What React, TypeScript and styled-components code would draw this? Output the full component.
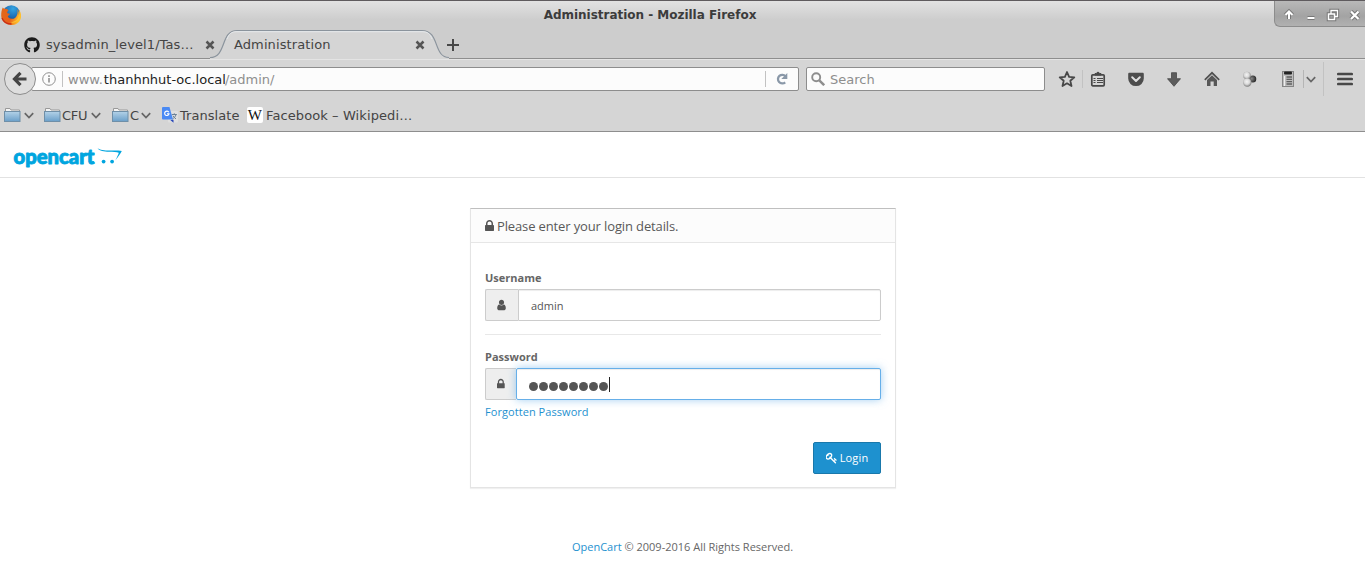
import React from 'react';
import styled, { createGlobalStyle } from 'styled-components';
import { FaGithub } from 'react-icons/fa';

const Global = createGlobalStyle`
  * { box-sizing: border-box; }
  body { margin: 0; background: #fff; overflow: hidden; }
  svg { display: block; flex: none; }
`;

const Window = styled.div`
  width: 1365px;
  height: 569px;
  display: flex;
  flex-direction: column;
  font-family: 'DejaVu Sans', sans-serif;
  font-size: 13px;
  color: #444;
`;

/* ---------- browser chrome ---------- */

const TitleBar = styled.div`
  height: 30px;
  flex: none;
  display: flex;
  align-items: flex-start;
  border-top: 1px solid #5f5b5e;
  background: linear-gradient(#e2e2e2, #cdcdcd 19px);
`;
const AppIcon = styled.div`
  width: 24px;
  padding: 4px 0 0 1px;
`;
const WindowTitle = styled.div`
  width: 1250px;
  padding-left: 2px;
  line-height: 28px;
  text-align: center;
  font-size: 12px;
  letter-spacing: -0.02px;
  font-weight: bold;
  color: #3c3c3c;
`;
const WindowControls = styled.div`
  width: 91px;
  height: 26px;
  border-left: 1px solid #8c8c8c;
  border-bottom: 1px solid #8c8c8c;
  border-bottom-left-radius: 6px;
  background: linear-gradient(#b9b9b9, #a3a3a3 60%, #b1b1b1);
`;

const TabStrip = styled.div`
  height: 29px;
  flex: none;
  display: flex;
  align-items: center;
  background: #cdcdcd;
  border-bottom: 1px solid #8e8e8e;
`;
const Tab = styled.div<{ $width: number; $pad: number }>`
  position: relative;
  width: ${(p) => p.$width}px;
  height: 30px;
  padding: 1px 0 0 ${(p) => p.$pad}px;
  display: flex;
  align-items: center;
`;
const TabLabel = styled.span<{ $left?: number }>`
  position: relative;
  flex: 1;
  margin-left: ${(p) => p.$left ?? 0}px;
  line-height: 27px;
  letter-spacing: 0.1px;
  white-space: nowrap;
`;
const TabShape = styled.svg`
  position: absolute;
  left: -5px;
  top: 0;
`;
const TabIcon = styled.div`
  position: relative;
`;

const Toolbar = styled.div`
  height: 40px;
  flex: none;
  display: flex;
  align-items: center;
  padding: 0 0 1px 4px;
  background: #d5d5d5;
  border-top: 1px solid #e4e4e4;
`;
const BackButton = styled.div`
  position: relative;
  z-index: 1;
  width: 32px;
  height: 32px;
  border: 1px solid #8c8c8c;
  border-radius: 50%;
  background: #dedede;
  display: flex;
  align-items: center;
  justify-content: center;
`;
const Field = styled.div<{ $width: number; $left: number; $pad: number }>`
  width: ${(p) => p.$width}px;
  height: 24px;
  margin-left: ${(p) => p.$left}px;
  padding-left: ${(p) => p.$pad}px;
  border: 1px solid #8d8d8d;
  border-radius: 2px;
  background: #fcfcfc;
  display: flex;
  align-items: center;
  color: #8e8e8e;
`;
const Url = styled.span`
  flex: 1;
  padding-top: 1px;
  white-space: nowrap;
  b { margin-left: 1px; margin-right: -1px; font-weight: normal; color: #222; }
`;
const SearchHint = styled.span`
  padding-top: 1px;
  margin-left: 5px;
`;
const Rule = styled.i<{ $height: number; $color?: string; $left?: number }>`
  width: 1px;
  flex: none;
  height: ${(p) => p.$height}px;
  margin-left: ${(p) => p.$left ?? 0}px;
  background: ${(p) => p.$color ?? '#c2c2c2'};
`;
const Slot = styled.div<{ $width: number; $left?: number }>`
  width: ${(p) => p.$width}px;
  flex: none;
  margin-left: ${(p) => p.$left ?? 0}px;
  display: flex;
  justify-content: center;
`;

const Bookmarks = styled.div`
  height: 33px;
  flex: none;
  display: flex;
  align-items: center;
  padding-left: 4px;
  background: #d5d5d5;
  border-bottom: 1px solid #8e8e8e;
`;
const Bookmark = styled.div<{ $width: number; $gap: number; $spacing?: number }>`
  width: ${(p) => p.$width}px;
  flex: none;
  display: flex;
  align-items: center;
  gap: ${(p) => p.$gap}px;
  white-space: nowrap;
  letter-spacing: ${(p) => p.$spacing ?? 0}px;
  line-height: 30px;
`;
const BookmarkLabel = styled.span<{ $width?: number }>`
  width: ${(p) => (p.$width ? `${p.$width}px` : 'auto')};
  padding-top: 2px;
`;

/* ---------- login page ---------- */

const Header = styled.header`
  height: 46px;
  flex: none;
  padding: 10px 0 0 12px;
  border-bottom: 1px solid #e2e2e2;
  background: #fff;
`;
const Page = styled.main`
  flex: 1;
  padding-top: 30px;
  font-family: 'Open Sans', sans-serif;
  font-size: 11px;
  color: #666;
`;
const Panel = styled.section`
  width: 426px;
  height: 280px;
  margin: 0 auto 0 470px;
  border: 1px solid #e4e4e4;
  border-top: 1px solid #bfbfbf;
  box-shadow: 0 1px 1px rgba(0, 0, 0, 0.06);
`;
const PanelHeading = styled.h1`
  height: 34px;
  margin: 0;
  padding-left: 14px;
  display: flex;
  align-items: center;
  gap: 3px;
  border-bottom: 1px solid #e6e6e6;
  background: #fcfcfc;
  font-size: 13px;
  letter-spacing: -0.13px;
  font-weight: normal;
  color: #595959;
`;
const PanelBody = styled.div`
  padding: 27px 14px 0;
  display: flex;
  flex-direction: column;
`;
const Label = styled.label`
  height: 15px;
  margin-bottom: 4px;
  line-height: 15px;
  font-weight: bold;
`;
const Group = styled.div`
  height: 32px;
  display: flex;
`;
const Addon = styled.span<{ $width: number }>`
  width: ${(p) => p.$width}px;
  padding-left: 11px;
  display: flex;
  align-items: center;
  border: 1px solid #ccc;
  border-right: 0;
  border-radius: 2px 0 0 2px;
  background: #eee;
  color: #555;
`;
const Input = styled.div<{ $focused?: boolean }>`
  position: relative;
  flex: 1;
  padding: 1px 0 0 12px;
  display: flex;
  align-items: center;
  border: 1px solid ${(p) => (p.$focused ? '#66afe9' : '#ccc')};
  border-radius: ${(p) => (p.$focused ? '2px' : '0 2px 2px 0')};
  background: #fff;
  box-shadow: inset 0 1px 1px rgba(0, 0, 0, 0.075)
    ${(p) => (p.$focused ? ', 0 0 8px rgba(102, 175, 233, 0.6)' : '')};
  color: #555;
`;
const Dot = styled.i`
  width: 9px;
  height: 9px;
  margin: 3px 1px 0 0;
  border-radius: 50%;
  background: #555;
`;
const Caret = styled.i`
  width: 1px;
  height: 15px;
  margin-top: -1px;
  background: #222;
`;
const Divider = styled.hr`
  width: 100%;
  height: 1px;
  margin: 13px 0 14px;
  border: 0;
  background: #e8e8e8;
`;
const Link = styled.a`
  color: #1e91cf;
`;
const Forgotten = styled(Link)`
  margin-top: 4px;
  line-height: 16px;
  letter-spacing: 0.06px;
`;
const LoginButton = styled.button`
  align-self: flex-end;
  width: 68px;
  height: 32px;
  margin-top: 22px;
  padding: 0 0 1px;
  display: flex;
  align-items: center;
  justify-content: center;
  gap: 3px;
  border: 1px solid #1978ab;
  border-radius: 2px;
  background: #1e91cf;
  color: #fff;
  font: 11px 'Open Sans', sans-serif;
  letter-spacing: 0.15px;
`;
const Footer = styled.footer`
  margin-top: 51px;
  line-height: 16px;
  text-align: center;
`;

/* ---------- icons ---------- */

const LockIcon = ({ size }: { size: number }) => (
  <svg width={(size * 1152) / 1792} height={size} viewBox="320 0 1152 1792" fill="#555">
    <path d="M640 768h512v-192q0-106-75-181t-181-75-181 75-75 181v192zm832 96v576q0 40-28 68t-68 28h-960q-40 0-68-28t-28-68v-576q0-40 28-68t68-28h32v-192q0-184 132-316t316-132 316 132 132 316v192h32q40 0 68 28t28 68z" />
  </svg>
);
const UserIcon = () => (
  <svg width="9" height="12" viewBox="256 0 1280 1792" fill="#555">
    <path d="M1536 1399q0 109-62.5 187t-150.5 78h-854q-88 0-150.5-78t-62.5-187q0-85 8.5-160.5t31.5-152 58.5-131 94-89 134.5-34.5q131 128 313 128t313-128q76 0 134.5 34.5t94 89 58.5 131 31.5 152 8.5 160.5zm-256-887q0 159-112.5 271.5t-271.5 112.5-271.5-112.5-112.5-271.5 112.5-271.5 271.5-112.5 271.5 112.5 112.5 271.5z" />
  </svg>
);
const KeyIcon = () => (
  <svg width="11" height="12" viewBox="96 0 1600 1792" fill="#fff">
    <path d="M832 512q0-80-56-136t-136-56-136 56-56 136q0 42 19 83-41-19-83-19-80 0-136 56t-56 136 56 136 136 56 136-56 56-136q0-42-19-83 41 19 83 19 80 0 136-56t56-136zm851 704q0 17-49 66t-66 49q-9 0-28.5-16t-36.5-33-38.5-40-24.5-26l-96 96 220 220q28 28 28 68 0 42-39 81t-81 39q-40 0-68-28l-671-671q-176 131-365 131-163 0-265.5-102.5t-102.5-265.5q0-160 95-313t248-248 313-95q163 0 265.5 102.5t102.5 265.5q0 189-131 365l355 355 96-96q-3-3-26-24.5t-40-38.5-33-36.5-16-28.5q0-17 49-66t66-49q13 0 23 10 6 6 46 44.5t82 79.5 86.5 86 73 78 28.5 41z" />
  </svg>
);
const FirefoxIcon = () => (
  <svg width="20" height="20" viewBox="0 0 20 20">
    <defs>
      <linearGradient id="fox" x1="0" y1="0" x2="1" y2="0.3">
        <stop offset="0" stopColor="#e06a1c" />
        <stop offset="0.6" stopColor="#e8601a" />
        <stop offset="1" stopColor="#ffc02d" />
      </linearGradient>
      <radialGradient id="globe" cx="0.6" cy="0.2" r="0.8">
        <stop offset="0" stopColor="#35a5e2" />
        <stop offset="0.6" stopColor="#1c6cb4" />
        <stop offset="1" stopColor="#153a78" />
      </radialGradient>
    </defs>
    <circle cx="10.300" cy="9" r="8.700" fill="url(#globe)" />
    <path d="M1.800 2.400C2.600 3.600 3.700 3.900 5 3.800c1 .2 1.800 .8 2.500 1.800-1 .5-1.400 1.300-1.200 2.400 1 .8 1.900 .5 2.900 .8-.8 1.300-1.800 1.500-2.400 2.700 1.200 2.300 4.600 3 7.200 1.400 2.300-1.700 3.200-4.900 2.300-8.400 2 2.800 1.400 5 1.700 5.500 .4-2.200 .2-4-.8-6 2.700 2.700 3.600 6.600 2.300 10.200-1.500 3.700-4.800 5.800-9.300 5.800C4.500 20 .2 15.700.2 10.500.2 7.300.6 4.500 1.800 2.400z" fill="url(#fox)" />
    <path d="M17.800 7c.8 4.500-1.200 8.200-5 9.600-1.200 .5-2.500 .6-3.600 .5 3 1.300 6.600 .3 8.500-2.600 1.400-2.300 1.400-5.200 .1-7.500z" fill="#ffc233" />
    <path d="M1 13c1.500 4 5 6 9.500 6" fill="none" stroke="#c72d17" strokeWidth="1.300" />
  </svg>
);
const ControlsIcons = () => (
  <svg width="90" height="25" viewBox="0 0 90 25" fill="none">
    {[
      { stroke: '#777', extra: 2 },
      { stroke: '#fff', extra: 0 },
    ].map((s) => (
      <g key={s.stroke} stroke={s.stroke}>
        <path d="M14 18v-6M10.500 14l3.500-3.500 3.500 3.500" strokeWidth={2 + s.extra} />
        <path d="M32.500 17h7" strokeWidth={2 + s.extra} />
        <path d="M56 13v-3.500h6.500v6H60" strokeWidth={1.300 + s.extra} />
        <path d="M53.500 13h6v5.500h-6z" strokeWidth={1.500 + s.extra} />
        <path d="M76 10.500l7.500 7.500M83.500 10.500l-7.500 7.500" strokeWidth={2.200 + s.extra} />
      </g>
    ))}
  </svg>
);
const CloseIcon = () => (
  <svg width="10" height="10" viewBox="0 0 10 10" stroke="#555" strokeWidth="2.500">
    <path d="M1.500 1.500l7 7M8.500 1.500l-7 7" />
  </svg>
);
const Chevron = () => (
  <svg width="10" height="7" viewBox="0 0 10 7" fill="none" stroke="#666" strokeWidth="1.700">
    <path d="M.8 1.200L5 5.500l4.200-4.300" />
  </svg>
);
const FolderIcon = () => (
  <svg width="17" height="15" viewBox="0 0 17 15">
    <defs>
      <linearGradient id="folder" x1="0" y1="0" x2="0" y2="1">
        <stop offset="0" stopColor="#b4d2e8" />
        <stop offset="1" stopColor="#6a9fc9" />
      </linearGradient>
    </defs>
    <path d="M1.500 4V.5H6L7 2h8.500v3" fill="#f4f4f4" stroke="#999" />
    <rect x=".5" y="3.500" width="15.500" height="10" fill="url(#folder)" stroke="#6f8fa8" />
  </svg>
);
const TranslateIcon = () => (
  <svg width="16" height="16" viewBox="0 0 16 16">
    <rect x="6" y="4" width="10" height="11.500" rx="1" fill="#dfdfdf" />
    <path d="M8.300 13l3.200 2.800v-3z" fill="#2a48b8" />
    <path d="M1 0h6.500l3.500 12.500H1a1 1 0 0 1-1-1V1a1 1 0 0 1 1-1z" fill="#4a8af4" />
    <path d="M6.800 5.300a2.200 2.200 0 1 0 .2 1.500H5" fill="none" stroke="#fff" strokeWidth="1.100" />
    <path d="M9.800 7.500h5M12.300 6.300v1.200M14 7.600c-.5 2-2 3.400-3.300 4.300M11 8.800c.7 1.400 1.800 2.300 3 3" fill="none" stroke="#6b8196" />
  </svg>
);
const WikipediaIcon = () => (
  <svg width="16" height="16" viewBox="0 0 16 16">
    <rect width="16" height="16" rx="2" fill="#fff" />
    <text x="8" y="13" textAnchor="middle" fontFamily="'Liberation Serif', serif" fontSize="15" fill="#111">W</text>
  </svg>
);

const StarIcon = () => (
  <svg width="18" height="18" viewBox="0 0 18 18" fill="none" stroke="#484848" strokeWidth="1.800">
    <path d="M9 2l2.100 4.800 5.200 .5-4 3.500 1.200 5.200L9 13.300 4.500 16l1.200-5.200-4-3.500 5.200-.5z" strokeLinejoin="round" />
  </svg>
);
const ClipboardIcon = () => (
  <svg width="16" height="16" viewBox="0 0 16 16" fill="none" stroke="#484848">
    <rect x="1.800" y="3.800" width="12.400" height="11" rx="1" strokeWidth="1.700" />
    <path d="M5 4V2.500h1.500C6.800 .8 9.200 .8 9.500 2.500H11V4z" fill="#484848" />
    <path d="M3.500 7.500h2M7 7.500h6M3.500 9.500h2M7 9.500h6M3.500 11.500h2M7 11.500h6" strokeWidth="1" />
  </svg>
);
const PocketIcon = () => (
  <svg width="16" height="15" viewBox="0 0 16 15">
    <path d="M1.500 .8h13c.8 0 1.300 .5 1.300 1.300v4.500a7.800 7.500 0 0 1-15.600 0V2.100C.2 1.300.7.8 1.500.8z" fill="#4d4d4d" />
    <path d="M4.200 5.300L8 8.900l3.800-3.600" fill="none" stroke="#e0e0e0" strokeWidth="2" strokeLinecap="round" strokeLinejoin="round" />
  </svg>
);
const DownloadIcon = () => (
  <svg width="14" height="15" viewBox="0 0 14 15">
    <path d="M4.500 .7h5v6h4L7 14.300.5 6.700h4z" fill="#5c5c5c" stroke="#484848" strokeWidth=".8" />
  </svg>
);
const HomeIcon = () => (
  <svg width="16" height="16" viewBox="0 0 16 16">
    <path d="M.8 8.800L8 1.800l7.200 7" fill="none" stroke="#505050" strokeWidth="1.700" />
    <path d="M3 9l5-4.700L13 9v6H9.700v-4.500H6.500V15H3z" fill="#585858" />
  </svg>
);
const SpheresIcon = () => (
  <svg width="16" height="16" viewBox="0 0 16 16">
    <defs>
      <radialGradient id="ball" cx=".45" cy=".4" r=".65">
        <stop offset="0" stopColor="#f4f4f4" />
        <stop offset=".5" stopColor="#d8d8d8" />
        <stop offset="1" stopColor="#6d6d6d" />
      </radialGradient>
      <radialGradient id="dark" cx=".35" cy=".45" r=".6">
        <stop offset="0" stopColor="#888" />
        <stop offset="1" stopColor="#2b2b2b" />
      </radialGradient>
    </defs>
    <circle cx="10.800" cy="8" r="3.500" fill="url(#dark)" />
    <circle cx="5" cy="4.600" r="3.800" fill="url(#ball)" />
    <circle cx="5.300" cy="11.500" r="4.200" fill="url(#ball)" />
  </svg>
);
const ServerIcon = () => (
  <svg width="12" height="16" viewBox="0 0 12 16">
    <rect x=".5" y=".5" width="11" height="15" fill="#bdbdbd" stroke="#858585" />
    <rect x="2" y=".5" width="8" height="3" rx="1" fill="#222" />
    <path d="M2.500 5v10" stroke="#eee" />
    <path d="M4.500 6H10M4.500 8.300H10M4.500 10.600H10M4.500 13H10" stroke="#606060" strokeWidth="1.300" />
  </svg>
);
const MenuIcon = () => (
  <svg width="16" height="14" viewBox="0 0 16 14" stroke="#484848" strokeWidth="2.700" strokeLinecap="round">
    <path d="M1.300 2h13.400M1.300 7h13.400M1.300 12h13.400" />
  </svg>
);
const OpenCartLogo = () => (
  <svg width="112" height="34" viewBox="0 -2 112 34" fill="#00a5df">
    <text
      x="1.500"
      y="19.500"
      textLength="81"
      lengthAdjust="spacingAndGlyphs"
      fontFamily="Lato, sans-serif"
      fontWeight="900"
      fontSize="20"
      stroke="#00a5df"
      strokeWidth=".9"
      strokeLinejoin="round"
    >
      opencart
    </text>
    <path d="M85.600 4.200c2 1.800 7 2.300 12 2.300 4.500 0 9.500-.2 12.200 .6-.8 1.800-3.500 5.800-6.600 9.500 1.600-3.200 3-5.600 3.600-7.900-2-.9-5.800-.7-9.800-.9-5-.2-9.600-1-11.400-3.600z" />
    <circle cx="91.600" cy="17.600" r="1.900" />
    <circle cx="100.100" cy="17.600" r="1.900" />
  </svg>
);

export default function App() {
  return (
    <Window>
      <Global />
      <TitleBar>
        <AppIcon><FirefoxIcon /></AppIcon>
        <WindowTitle>Administration - Mozilla Firefox</WindowTitle>
        <WindowControls><ControlsIcons /></WindowControls>
      </TitleBar>

      <TabStrip>
        <Tab $width={215} $pad={24}>
          <TabIcon><FaGithub size={16} color="#1b1b1b" /></TabIcon>
          <TabLabel $left={6}>sysadmin_level1/Tas…</TabLabel>
          <CloseIcon />
        </Tab>
        <Tab $width={210} $pad={19}>
          <TabShape width="240" height="30" viewBox="0 0 240 30">
            <path d="M0 28.500C17 28.500 10 1.500 27 1.500H212C230 1.500 223 28.500 239 28.500V30H0z" fill="#d5d5d5" />
            <path d="M0 28.500C17 28.500 10 1.500 27 1.500H212C230 1.500 223 28.500 239 28.500" fill="none" stroke="#8b949d" strokeWidth="1.200" />
            <path d="M17 10C19 5 21 2.700 27 2.700H212C218 2.700 220 5 222 10" fill="none" stroke="#e6e9ec" />
          </TabShape>
          <TabLabel>Administration</TabLabel>
          <TabIcon><CloseIcon /></TabIcon>
        </Tab>
        <Slot $width={14} $left={21}>
          <svg width="14" height="16" viewBox="0 -2 14 16" stroke="#484848" strokeWidth="2">
            <path d="M7 1v12M1 7h12" />
          </svg>
        </Slot>
      </TabStrip>

      <Toolbar>
        <BackButton>
          <svg width="16" height="16" viewBox="0 0 16 16" fill="none" stroke="#444" strokeWidth="3.200">
            <path d="M8.500 1.800L2.500 8l6 6.200M3 8h11.500" />
          </svg>
        </BackButton>
        <Field $width={768} $left={-5} $pad={9}>
          <svg width="16" height="16" viewBox="0 0 16 16" fill="none" stroke="#909090">
            <circle cx="8" cy="8" r="6.300" />
            <path d="M8 7v4.500M8 4.300v1.600" strokeWidth="1.600" />
          </svg>
          <Slot $width={11}><Rule $height={16} /></Slot>
          <Url>www.<b>thanhnhut-oc.local</b>/admin/</Url>
          <Rule $height={16} />
          <Slot $width={32}>
            <svg width="14" height="14" viewBox="0 0 14 14">
              <path d="M10.200 10.300a4.300 4.300 0 1 1 .3-6" fill="none" stroke="#8a98a8" strokeWidth="2.300" />
              <path d="M12.300 1v6h-6z" fill="#8a98a8" />
            </svg>
          </Slot>
        </Field>
        <Field $width={239} $left={7} $pad={4}>
          <svg width="14" height="14" viewBox="0 0 14 14" fill="none" stroke="#8e8e8e">
            <circle cx="5.200" cy="5.200" r="4" strokeWidth="1.900" />
            <path d="M8.300 8.300l4.900 4.900" strokeWidth="2.500" />
          </svg>
          <SearchHint>Search</SearchHint>
        </Field>
        <Slot $width={30} $left={7}><StarIcon /></Slot>
        <Rule $height={18} />
        <Slot $width={32} $left={-1}><ClipboardIcon /></Slot>
        <Slot $width={38} $left={3}><PocketIcon /></Slot>
        <Slot $width={38}><DownloadIcon /></Slot>
        <Slot $width={38}><HomeIcon /></Slot>
        <Slot $width={38}><SpheresIcon /></Slot>
        <Slot $width={34} $left={2}><ServerIcon /></Slot>
        <Rule $height={18} $color="#b5b5b5" $left={-2} />
        <Slot $width={13}><Chevron /></Slot>
        <Slot $width={13}><Rule $height={34} /></Slot>
        <Slot $width={30}><MenuIcon /></Slot>
      </Toolbar>

      <Bookmarks>
        <Bookmark $width={40} $gap={3}><FolderIcon /><Chevron /></Bookmark>
        <Bookmark $width={68} $gap={1} $spacing={-0.3}>
          <FolderIcon /><BookmarkLabel $width={28}>CFU</BookmarkLabel><Chevron />
        </Bookmark>
        <Bookmark $width={50} $gap={1}>
          <FolderIcon /><BookmarkLabel $width={10}>C</BookmarkLabel><Chevron />
        </Bookmark>
        <Bookmark $width={85} $gap={2} $spacing={0.05}>
          <TranslateIcon /><BookmarkLabel>Translate</BookmarkLabel>
        </Bookmark>
        <Bookmark $width={180} $gap={3} $spacing={0.1}>
          <WikipediaIcon /><BookmarkLabel>Facebook – Wikipedi…</BookmarkLabel>
        </Bookmark>
      </Bookmarks>

      <Header><OpenCartLogo /></Header>

      <Page>
        <Panel>
          <PanelHeading><LockIcon size={14} />Please enter your login details.</PanelHeading>
          <PanelBody>
            <Label>Username</Label>
            <Group>
              <Addon $width={33}><UserIcon /></Addon>
              <Input>admin</Input>
            </Group>
            <Divider />
            <Label>Password</Label>
            <Group>
              <Addon $width={31}><LockIcon size={12} /></Addon>
              <Input $focused>
                {Array.from({ length: 8 }, (_, i) => <Dot key={i} />)}
                <Caret />
              </Input>
            </Group>
            <Forgotten>Forgotten Password</Forgotten>
            <LoginButton><KeyIcon />Login</LoginButton>
          </PanelBody>
        </Panel>
        <Footer><Link>OpenCart</Link> © 2009-2016 All Rights Reserved.</Footer>
      </Page>
    </Window>
  );
}
